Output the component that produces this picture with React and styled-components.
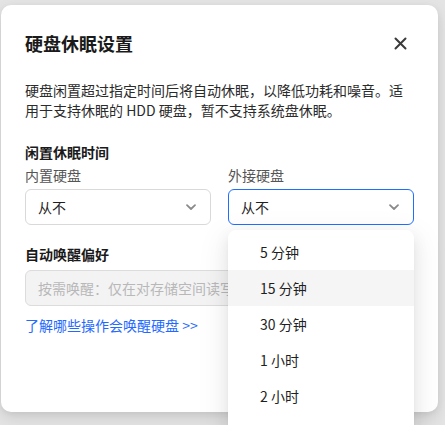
import React from 'react';
import styled, { createGlobalStyle } from 'styled-components';

const GlobalStyle = createGlobalStyle`
  html, body {
    margin: 0;
    padding: 0;
    height: 100%;
    overflow: hidden;
    background: #e4e4e4;
    font-family: "Noto Sans CJK SC", "Noto Sans", sans-serif;
  }
`;

const Page = styled.div`
  padding: 5px 7px 0 1px;
`;

const Modal = styled.div`
  position: relative;
  box-sizing: border-box;
  width: 437px;
  height: 407px;
  padding: 24px 24px 24px 24px;
  background: #fff;
  border-radius: 10px;
  box-shadow: 0 6px 16px rgba(0, 0, 0, 0.1), 0 2px 6px rgba(0, 0, 0, 0.06);
  display: flex;
  flex-direction: column;
`;

const Header = styled.div`
  display: flex;
  align-items: center;
  justify-content: space-between;
  height: 28px;
`;

const Title = styled.h2`
  margin: 0;
  font-size: 18px;
  font-weight: 700;
  color: #1a1a1a;
  line-height: 28px;
`;

const CloseButton = styled.button`
  border: none;
  background: none;
  padding: 0;
  margin-right: 4px;
  width: 20px;
  height: 20px;
  display: flex;
  align-items: center;
  justify-content: center;
  color: #3a3a3a;
  cursor: pointer;
`;

const Description = styled.p`
  margin: 23px 0 0;
  font-size: 14px;
  line-height: 20px;
  color: #2b2b2b;
`;

const SectionTitle = styled.div`
  margin-top: ${(p) => p.$top}px;
  font-size: 14px;
  font-weight: 700;
  line-height: 20px;
  color: #1a1a1a;
`;

const Row = styled.div`
  display: grid;
  grid-template-columns: 1fr 1fr;
  gap: 17px;
  margin-top: 3px;
`;

const Field = styled.div`
  position: relative;
  display: flex;
  flex-direction: column;
`;

const Label = styled.div`
  font-size: 14px;
  line-height: 20px;
  color: #555;
`;

const Select = styled.div`
  box-sizing: border-box;
  margin-top: 4px;
  height: 36px;
  padding: 0 12px;
  display: flex;
  align-items: center;
  justify-content: space-between;
  border: 1px solid ${(p) => (p.$open ? '#1f6fff' : '#d9d9d9')};
  border-radius: 6px;
  font-size: 14px;
  color: #1f1f1f;
  background: #fff;
`;

const Chevron = styled.svg`
  color: #8a8a8a;
  margin-right: 1px;
`;

const DisabledInput = styled.div`
  box-sizing: border-box;
  margin-top: 6px;
  height: 36px;
  padding: 0 12px;
  display: flex;
  align-items: center;
  border: 1px solid #dcdcdc;
  border-radius: 6px;
  background: #f3f3f4;
  font-size: 14px;
  color: #b8b8b8;
  white-space: nowrap;
  overflow: hidden;
`;

const Link = styled.a`
  margin-top: 9px;
  font-size: 14px;
  line-height: 20px;
  color: #2469ff;
  text-decoration: none;
`;

const Footer = styled.div`
  margin-top: auto;
  display: flex;
  justify-content: flex-end;
  gap: 10px;
`;

const Button = styled.button`
  box-sizing: border-box;
  width: 88px;
  height: 32px;
  border-radius: 6px;
  font-family: inherit;
  font-size: 14px;
  border: 1px solid ${(p) => (p.$primary ? '#1f6fff' : '#d0d0d0')};
  background: ${(p) => (p.$primary ? '#1f6fff' : '#fff')};
  color: ${(p) => (p.$primary ? '#fff' : '#333')};
`;

const Menu = styled.ul`
  position: absolute;
  top: 65px;
  left: 0;
  right: 0;
  margin: 0;
  padding: 4px 0 40px;
  list-style: none;
  background: #fff;
  border-radius: 8px;
  box-shadow: 0 6px 16px 0 rgba(0, 0, 0, 0.08), 0 3px 6px -4px rgba(0, 0, 0, 0.12),
    0 9px 28px 8px rgba(0, 0, 0, 0.05);
  z-index: 10;
`;

const MenuItem = styled.li`
  height: 36px;
  display: flex;
  align-items: center;
  padding-left: 32px;
  font-size: 14px;
  color: #1f1f1f;
  background: ${(p) => (p.$active ? '#f5f5f5' : 'transparent')};
`;

const ChevronIcon = () => (
  <Chevron width="12" height="12" viewBox="0 0 12 12" fill="none">
    <path d="M2 4.2 L6 8 L10 4.2" stroke="currentColor" strokeWidth="1.8" strokeLinecap="round" strokeLinejoin="round" />
  </Chevron>
);

const options = ['5 分钟', '15 分钟', '30 分钟', '1 小时', '2 小时'];

const App = () => {
  return (
    <Page>
      <GlobalStyle />
      <Modal>
        <Header>
          <Title>硬盘休眠设置</Title>
          <CloseButton aria-label="关闭">
            <svg width="13" height="13" viewBox="0 0 13 13">
              <path d="M1.5 1.5 L11.5 11.5 M11.5 1.5 L1.5 11.5" stroke="currentColor" strokeWidth="2" strokeLinecap="round" />
            </svg>
          </CloseButton>
        </Header>
        <Description>
          硬盘闲置超过指定时间后将自动休眠，以降低功耗和噪音。适用于支持休眠的 HDD 硬盘，暂不支持系统盘休眠。
        </Description>

        <SectionTitle $top={22}>闲置休眠时间</SectionTitle>
        <Row>
          <Field>
            <Label>内置硬盘</Label>
            <Select>
              从不
              <ChevronIcon />
            </Select>
          </Field>
          <Field>
            <Label>外接硬盘</Label>
            <Select $open>
              从不
              <ChevronIcon />
            </Select>
            <Menu>
              {options.map((o) => (
                <MenuItem key={o} $active={o === '15 分钟'}>
                  {o}
                </MenuItem>
              ))}
            </Menu>
          </Field>
        </Row>

        <SectionTitle $top={19}>自动唤醒偏好</SectionTitle>
        <DisabledInput>按需唤醒：仅在对存储空间读写时唤醒硬盘</DisabledInput>
        <Link href="#">了解哪些操作会唤醒硬盘 &gt;&gt;</Link>

        <Footer>
          <Button>取消</Button>
          <Button $primary>确定</Button>
        </Footer>
      </Modal>
    </Page>
  );
};

export default App;
